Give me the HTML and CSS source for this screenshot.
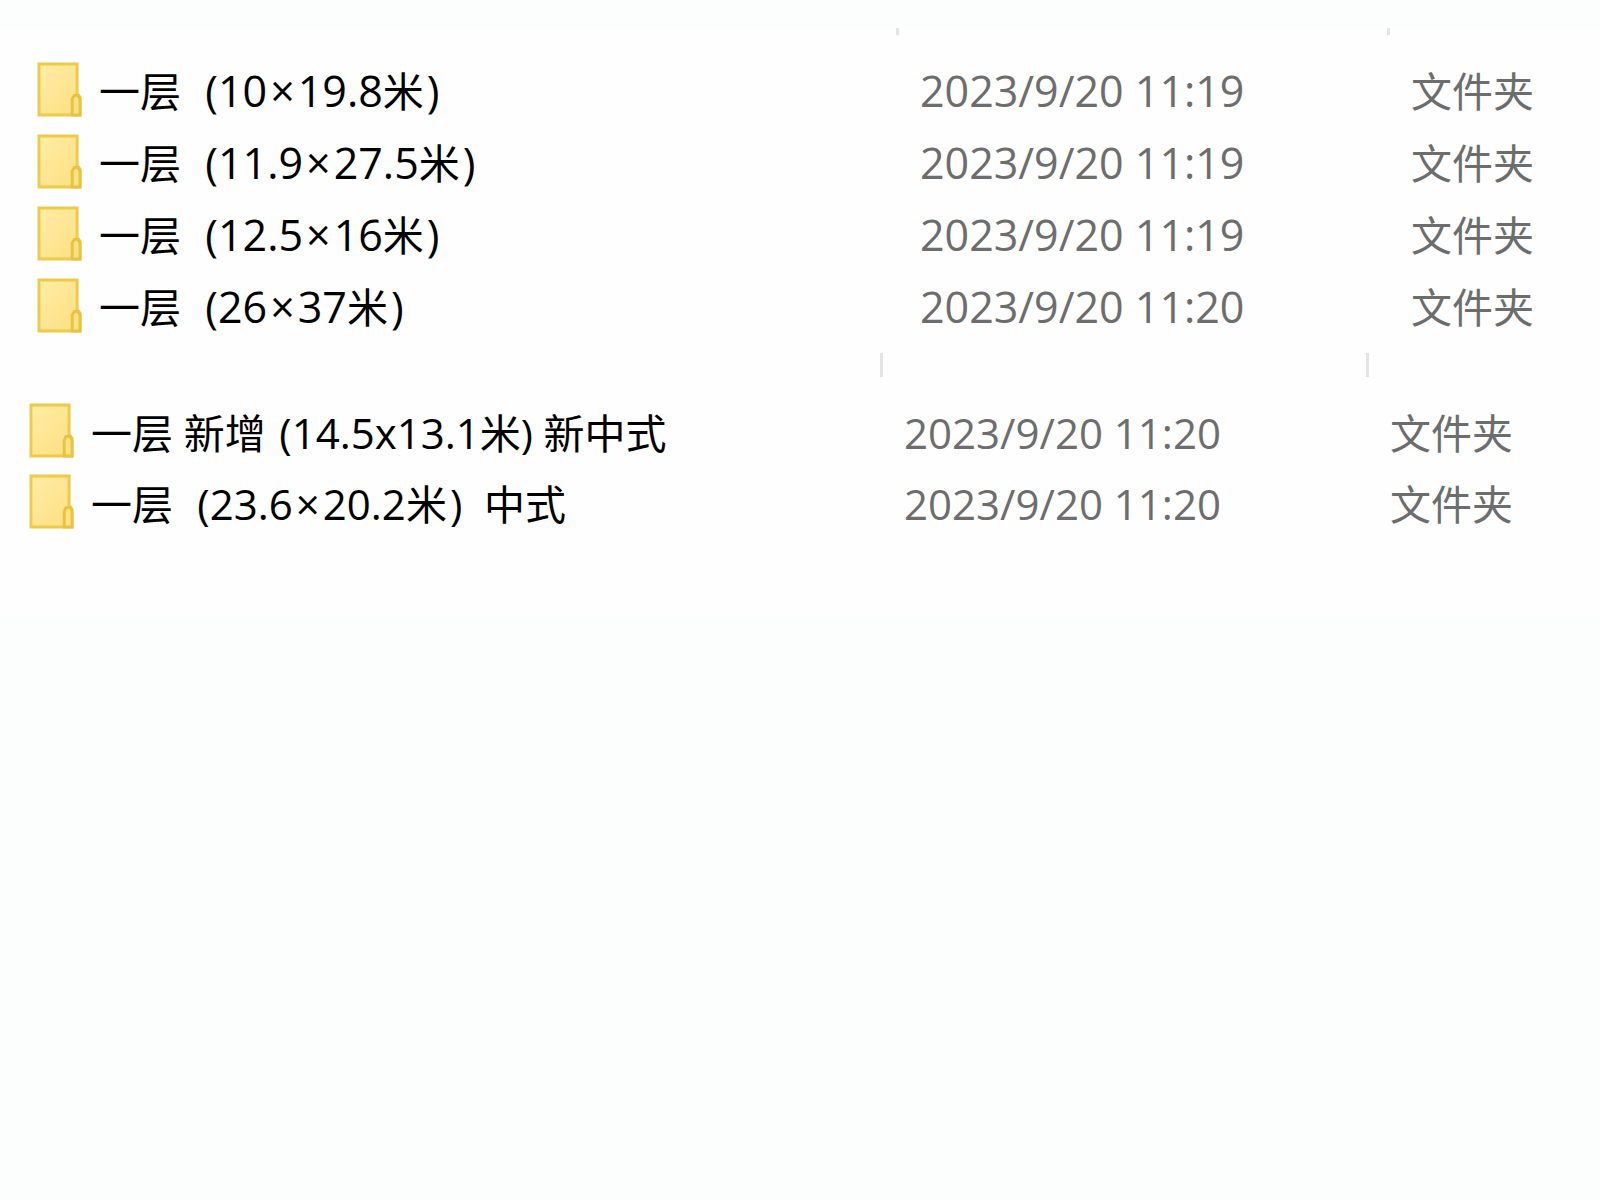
FILE: index.html
```html
<!DOCTYPE html>
<html lang="zh-CN">
<head>
<meta charset="utf-8">
<title>文件夹</title>
<link rel="stylesheet" href="styles.css">
</head>
<body>
<svg class="defs" width="0" height="0" aria-hidden="true">
  <defs>
    <linearGradient id="paper" x1="0" y1="0" x2="1" y2="1">
      <stop offset="0" stop-color="#ffeca6"/>
      <stop offset="1" stop-color="#fddf80"/>
    </linearGradient>
    <symbol id="folder" viewBox="0 0 46 56">
      <path d="M2 2H41V32L44 36V54H2Z" fill="url(#paper)" stroke="#efca48" stroke-width="3"/>
      <path d="M36 54V38L38 34H42L44 38V54Z" fill="#fde184" stroke="#e8c243" stroke-width="3"/>
    </symbol>
  </defs>
</svg>
<main class="files">
  <table class="list list-first">
    <colgroup><col class="col-name"><col class="col-date"><col></colgroup>
    <thead>
      <tr><td></td><td><span class="divider"></span></td><td><span class="divider"></span></td></tr>
    </thead>
    <tbody>
      <tr><td><div class="name"><svg class="icon"><use href="#folder"/></svg><span class="label">一层&nbsp; <span class="size">(10<span class="times">×</span>19.8</span>米<span class="size">)</span></span></div></td><td class="meta date">2023/9/20 11:19</td><td class="meta">文件夹</td></tr>
      <tr><td><div class="name"><svg class="icon"><use href="#folder"/></svg><span class="label">一层&nbsp; <span class="size">(11.9<span class="times">×</span>27.5</span>米<span class="size">)</span></span></div></td><td class="meta date">2023/9/20 11:19</td><td class="meta">文件夹</td></tr>
      <tr><td><div class="name"><svg class="icon"><use href="#folder"/></svg><span class="label">一层&nbsp; <span class="size">(12.5<span class="times">×</span>16</span>米<span class="size">)</span></span></div></td><td class="meta date">2023/9/20 11:19</td><td class="meta">文件夹</td></tr>
      <tr><td><div class="name"><svg class="icon"><use href="#folder"/></svg><span class="label">一层&nbsp; <span class="size">(26<span class="times">×</span>37</span>米<span class="size">)</span></span></div></td><td class="meta date">2023/9/20 11:20</td><td class="meta">文件夹</td></tr>
    </tbody>
  </table>
  <table class="list list-second">
    <colgroup><col class="col-name"><col class="col-date"><col></colgroup>
    <thead>
      <tr><td></td><td><span class="divider"></span></td><td><span class="divider"></span></td></tr>
    </thead>
    <tbody>
      <tr><td><div class="name"><svg class="icon"><use href="#folder"/></svg><span class="label">一层 新增 <span class="size">(14.5x13.1</span>米) 新中式</span></div></td><td class="meta date">2023/9/20 11:20</td><td class="meta">文件夹</td></tr>
      <tr><td><div class="name"><svg class="icon"><use href="#folder"/></svg><span class="label">一层&nbsp; <span class="size">(23.6<span class="times">×</span>20.2</span>米<span class="size">)&nbsp; </span>中式</span></div></td><td class="meta date">2023/9/20 11:20</td><td class="meta">文件夹</td></tr>
    </tbody>
  </table>
</main>
</body>
</html>
```
FILE: styles.css
```css
body {
  margin: 0;
  padding-top: 28px;
  background: #fcfefd;
  color: #000;
  font-family: "Open Sans", "Noto Sans CJK SC", sans-serif;
  font-size: 41px;
  line-height: 56px;
}

.defs {
  position: absolute;
}

.files {
  padding-bottom: 79px;
  background: #fefefe;
}

.list {
  width: 100%;
  table-layout: fixed;
  border-collapse: collapse;
}

.list td {
  padding: 0;
  white-space: nowrap;
}

.divider {
  display: block;
  width: 3px;
  background: #e4e4e4;
}

.name {
  display: flex;
  align-items: center;
  gap: 17px;
}

.icon {
  flex: none;
  width: 45px;
  height: 55px;
}

.label {
  padding-top: 4px;
}

.size {
  margin-left: 3px;
}

.times {
  margin: 0 3px;
}

.list .meta {
  padding: 4px 0 0 24px;
  color: #6d6d6d;
}

.list-first .col-name { width: 896px; }
.list-first .col-date { width: 491px; }
.list-first thead td { padding-bottom: 18px; }
.list-first .divider { height: 7px; }
.list-first tbody tr { height: 72px; }
.list-first .name { padding-left: 37px; }
.list-first .size,
.list-first .date { font-size: 43px; }

.list-second .col-name { width: 880px; }
.list-second .col-date { width: 486px; }
.list-second thead td { padding: 12px 0 18px; }
.list-second .divider { height: 24px; }
.list-second tbody tr { height: 71px; }
.list-second .name { padding-left: 29px; }
.list-second .size,
.list-second .date { font-size: 42px; }
```
